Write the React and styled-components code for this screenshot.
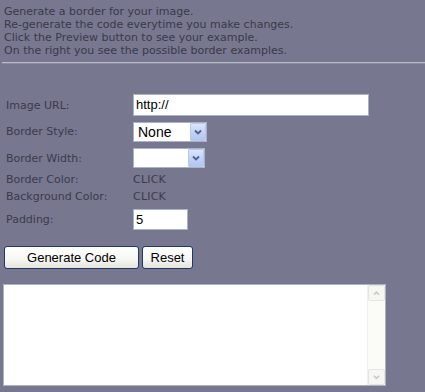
import React from "react";
import styled, { createGlobalStyle } from "styled-components";

const Global = createGlobalStyle`
  html, body { margin: 0; padding: 0; background: #777790; }
  body { font-family: "DejaVu Sans", Verdana, sans-serif; font-size: 11px; color: #3b3b4c; }
  #root { width: 425px; height: 392px; overflow: hidden; background: #777790; }
`;

const Page = styled.div`
  width: 425px;
  height: 392px;
  background: #777790;
`;

const Intro = styled.div`
  padding: 5px 0 0 4px;
  line-height: 13px;
  color: #3a3a4a;
`;

const Rule = styled.div`
  margin: 5px 0 0 2px;
  height: 1px;
  background: #b9b9c8;
  border-bottom: 1px solid #8a8aa0;
`;

const Form = styled.div`
  margin-top: 27px;
  display: flex;
  flex-direction: column;
`;

const Row = styled.div`
  display: flex;
  align-items: center;
  height: ${(p) => p.$h}px;
  padding-left: 6px;
`;

const Label = styled.div`
  width: 127px;
  flex: none;
  color: #3b3b4c;
  padding-top: ${(p) => (p.$shift ? 2 : 0)}px;
`;

const Value = styled.div`
  color: #3b3b4c;
  letter-spacing: 0.2px;
`;

const TextInput = styled.input`
  box-sizing: border-box;
  width: ${(p) => p.$w}px;
  height: ${(p) => p.$hgt}px;
  margin: 0;
  padding: 0 2px;
  border: 1px solid #a9b3c6;
  background: #fff;
  font-family: "Liberation Sans", Arial, sans-serif;
  font-size: 13px;
  color: #000;
  outline: none;
`;

const SelectWrap = styled.div`
  position: relative;
  box-sizing: border-box;
  width: ${(p) => p.$w}px;
  height: 20px;
  border: 1px solid #a9b3c6;
  background: #fff;
`;

const Select = styled.select`
  appearance: none;
  -webkit-appearance: none;
  box-sizing: border-box;
  width: 100%;
  height: 100%;
  margin: 0;
  border: 0;
  padding: 0 0 0 4px;
  background: transparent;
  font-family: "Liberation Sans", Arial, sans-serif;
  font-size: 14px;
  color: #000;
  outline: none;
`;

const DropButton = styled.div`
  position: absolute;
  top: 0;
  right: 0;
  bottom: 0;
  width: 16px;
  box-sizing: border-box;
  border: 1px solid #b9c9ee;
  border-radius: 1px;
  background: linear-gradient(180deg, #dbe5fb 0%, #c3d3f6 50%, #b3c6f2 100%);
  display: flex;
  align-items: center;
  justify-content: center;
  pointer-events: none;
`;

const Buttons = styled.div`
  display: flex;
  gap: 3px;
  margin: 13px 0 0 4px;
`;

const Button = styled.button`
  box-sizing: border-box;
  width: ${(p) => p.$w}px;
  height: 23px;
  margin: 0;
  padding: 0;
  border: 1px solid #1f3a64;
  border-radius: 3px;
  background: linear-gradient(180deg, #ffffff 0%, #f6f6f2 60%, #e4e3dc 100%);
  font-family: "Liberation Sans", Arial, sans-serif;
  font-size: 13px;
  color: #000;
`;

const CodeBox = styled.div`
  display: flex;
  box-sizing: border-box;
  width: 383px;
  height: 102px;
  margin: 15px 0 0 3px;
  border: 1px solid #a9b3c6;
  background: #fff;
`;

const CodeArea = styled.textarea`
  flex: 1;
  margin: 0;
  border: 0;
  padding: 2px;
  resize: none;
  outline: none;
  background: #fff;
  overflow: hidden;
`;

const Scrollbar = styled.div`
  width: 17px;
  flex: none;
  display: flex;
  flex-direction: column;
  justify-content: space-between;
  background: #fbfbf7;
  border-left: 1px solid #f0f0ea;
`;

const ScrollBtn = styled.div`
  height: 16px;
  box-sizing: border-box;
  border: 1px solid #e6e6e0;
  border-radius: 2px;
  background: #f6f6f2;
  display: flex;
  align-items: center;
  justify-content: center;
`;

const Chevron = ({ up, color, w = 8 }) => (
  <svg width={w} height="6" viewBox="0 0 8 6">
    <path
      d={up ? "M1 5 L4 2 L7 5" : "M1 1.5 L4 4.5 L7 1.5"}
      fill="none"
      stroke={color}
      strokeWidth="1.8"
    />
  </svg>
);

const Dropdown = ({ w, value, options }) => (
  <SelectWrap $w={w}>
    <Select defaultValue={value}>
      {options.map((o) => (
        <option key={o} value={o}>
          {o}
        </option>
      ))}
    </Select>
    <DropButton>
      <Chevron color="#4d6190" />
    </DropButton>
  </SelectWrap>
);

export default function App() {
  return (
    <Page>
      <Global />
      <Intro>
        <div>Generate a border for your image.</div>
        <div>Re-generate the code everytime you make changes.</div>
        <div>Click the Preview button to see your example.</div>
        <div>On the right you see the possible border examples.</div>
      </Intro>
      <Rule />
      <Form>
        <Row $h={27}>
          <Label $shift>Image URL:</Label>
          <TextInput $w={236} $hgt={22} defaultValue="http://" />
        </Row>
        <Row $h={27}>
          <Label>Border Style:</Label>
          <Dropdown w={74} value="None" options={["None", "solid", "dashed", "dotted", "double"]} />
        </Row>
        <Row $h={26}>
          <Label>Border Width:</Label>
          <Dropdown w={72} value="" options={["", "1px", "2px", "3px"]} />
        </Row>
        <Row $h={17}>
          <Label>Border Color:</Label>
          <Value>CLICK</Value>
        </Row>
        <Row $h={17}>
          <Label>Background Color:</Label>
          <Value>CLICK</Value>
        </Row>
        <Row $h={28}>
          <Label>Padding:</Label>
          <TextInput $w={55} $hgt={21} defaultValue="5" />
        </Row>
      </Form>
      <Buttons>
        <Button $w={135}>Generate Code</Button>
        <Button $w={51}>Reset</Button>
      </Buttons>
      <CodeBox>
        <CodeArea />
        <Scrollbar>
          <ScrollBtn>
            <Chevron up color="#c9c9c4" w={7} />
          </ScrollBtn>
          <ScrollBtn>
            <Chevron color="#c9c9c4" w={7} />
          </ScrollBtn>
        </Scrollbar>
      </CodeBox>
    </Page>
  );
}
